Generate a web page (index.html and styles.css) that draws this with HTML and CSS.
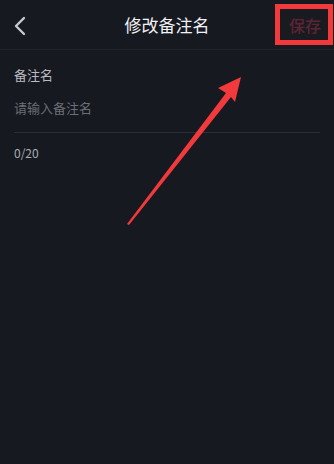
FILE: index.html
```html
<!DOCTYPE html>
<html lang="zh-CN">
<head>
    <meta charset="UTF-8">
    <meta name="viewport" content="width=device-width, initial-scale=1.0">
    <title>修改备注名</title>
    <link rel="stylesheet" href="styles.css">
</head>
<body>
    <div class="page">
        <div class="header">
            <div class="back">
                <svg width="12" height="20" viewBox="0 0 12 20">
                    <path d="M10 2 L2 10 L10 18" fill="none" stroke="#c8cacf" stroke-width="2.4" stroke-linecap="round" stroke-linejoin="round"/>
                </svg>
            </div>
            <div class="title">修改备注名</div>
            <div class="right">
                <div class="save">保存</div>
            </div>
        </div>
        <div class="form">
            <div class="label">备注名</div>
            <div class="input">请输入备注名</div>
            <div class="count">0/20</div>
        </div>
        <svg class="arrow" width="334" height="464" viewBox="0 0 334 464">
            <polygon points="127,224 226,93 218,88 241,77 235,102 231,97 129,225" fill="#f2393b"/>
        </svg>
    </div>
</body>
</html>
```

FILE: styles.css
```css
body, html {
    margin: 0;
    padding: 0;
    height: 100%;
    overflow: hidden;
    background: #161920;
    font-family: "Noto Sans CJK SC", "Noto Sans", sans-serif;
}

.page {
    position: relative;
    height: 100%;
}

.header {
    height: 50px;
    display: grid;
    grid-template-columns: 1fr auto 1fr;
    align-items: center;
    border-bottom: 1px solid #1f232b;
    box-sizing: border-box;
}

.back {
    display: flex;
    align-items: center;
    padding: 2px 0 0 14px;
}

.title {
    color: #f2f2f4;
    font-size: 17px;
}

.right {
    display: flex;
    justify-content: flex-end;
    padding-right: 1px;
}

.save {
    width: 58px;
    height: 41px;
    box-sizing: border-box;
    border: 5px solid #f2393b;
    background: #1a1b21;
    color: #5e2434;
    font-size: 16px;
    font-weight: 500;
    display: flex;
    align-items: center;
    justify-content: center;
    padding-left: 2px;
}

.form {
    padding: 15px 14px 0 14px;
}

.label {
    color: #b9bbc0;
    font-size: 13px;
    line-height: 20px;
}

.input {
    color: #6b6e75;
    font-size: 13px;
    line-height: 20px;
    padding: 13px 0 14px;
    border-bottom: 1px solid #2a2d35;
    width: 306px;
}

.count {
    color: #a9abb1;
    font-size: 12px;
    line-height: 18px;
    padding-top: 11px;
}

.arrow {
    position: absolute;
    left: 0;
    top: 0;
}
```
